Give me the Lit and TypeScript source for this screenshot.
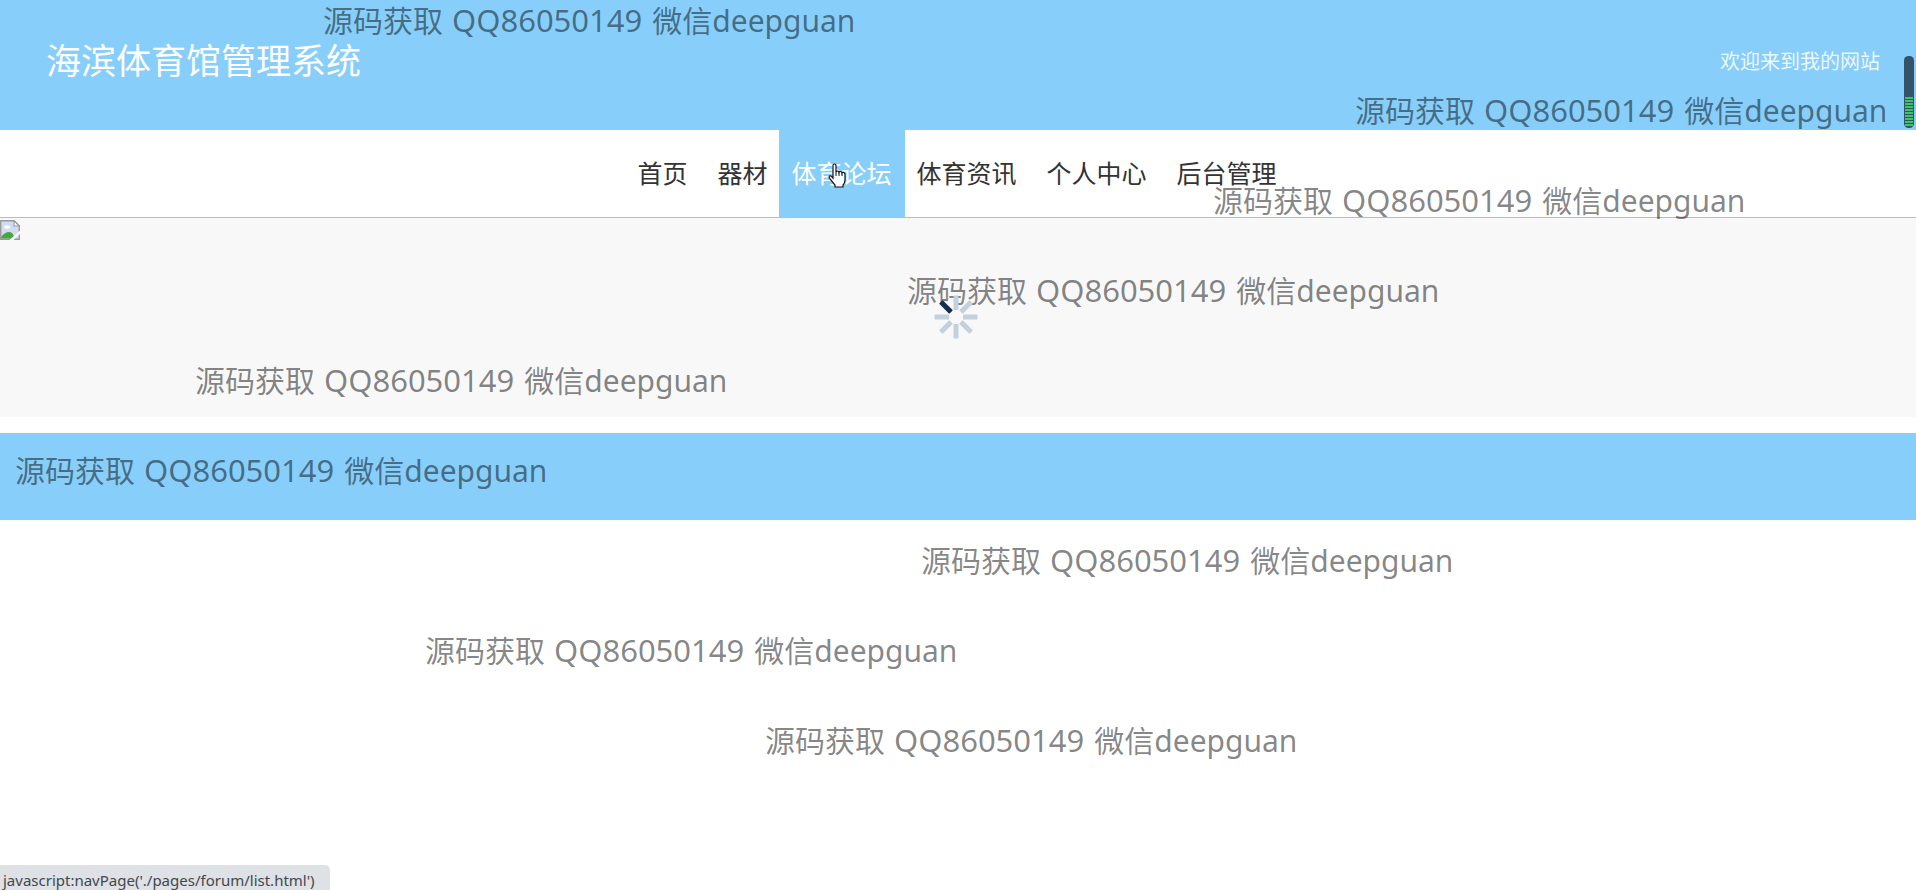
import { LitElement, html, css, svg } from "lit";
import { customElement } from "lit/decorators.js";

interface NavItem {
  label: string;
  page: string;
  active?: boolean;
}

const NAV: NavItem[] = [
  { label: "首页", page: "./pages/home/home.html" },
  { label: "器材", page: "./pages/equipment/list.html" },
  { label: "体育论坛", page: "./pages/forum/list.html", active: true },
  { label: "体育资讯", page: "./pages/news/list.html" },
  { label: "个人中心", page: "./pages/user/center.html" },
  { label: "后台管理", page: "./pages/admin/index.html" },
];

/* Left edge of each watermark line, top to bottom. */
const MARKS = [323, 1355, 1213, 907, 195, 15, 921, 425, 765];

@customElement("site-spinner")
export class SiteSpinner extends LitElement {
  static styles = css`
    :host { display: block; width: 44px; height: 44px; }
    svg { display: block; }
    .bar { fill: #c3d0de; }
    .lead { fill: #14304f; }
  `;
  render() {
    return html`<svg width="44" height="44" viewBox="-22 -22 44 44" aria-hidden="true">
      ${[0, 45, 90, 135, 180, 225, 270, 315].map(
        (a) => svg`<rect class=${a === 315 ? "lead" : "bar"} x="-2.5" y="-21.5" width="5" height="14.5" rx="0.6" transform="rotate(${a})"></rect>`
      )}
    </svg>`;
  }
}

@customElement("site-watermark")
export class SiteWatermark extends LitElement {
  static styles = css`
    :host {
      position: absolute;
      inset: 0;
      overflow: hidden;
      pointer-events: none;
      display: flex;
      flex-direction: column;
      gap: 50px;
    }
    .line {
      display: flex;
      flex: none;
      align-items: baseline;
      height: 40px;
      font-size: 30px;
      line-height: 40px;
      white-space: nowrap;
      color: rgba(0, 0, 0, 0.49);
    }
    .number { font-size: 31px; margin: 0 10px 0 9px; }
  `;
  render() {
    return MARKS.map(
      (x) => html`<div class="line" style="margin-left:${x}px"><span>源码获取</span><span class="number">QQ86050149</span><span>微信</span><span>deepguan</span></div>`
    );
  }
}

@customElement("app-root")
export class AppRoot extends LitElement {
  static styles = css`
    :host {
      display: block;
      position: relative;
      min-height: 100vh;
      overflow: hidden;
      background: #fff;
      color: #333;
      font-family: "Noto Sans", "Noto Sans CJK SC", sans-serif;
    }
    .header {
      display: flex;
      justify-content: space-between;
      align-items: center;
      height: 130px;
      padding: 0 36px 8px 46px;
      box-sizing: border-box;
      background: #87cefa;
      color: #fff;
    }
    .title { margin: 0; font-size: 35px; line-height: 48px; font-weight: 400; }
    .welcome { font-size: 20px; line-height: 28px; padding-top: 2px; opacity: 0.85; }
    .nav {
      display: flex;
      justify-content: center;
      gap: 6px;
      padding-right: 2px;
      border-bottom: 1px solid #bbb;
    }
    .link {
      padding: 0 12px;
      font-size: 25px;
      line-height: 87px;
      color: #333;
      text-decoration: none;
    }
    .link.active { margin: 0 -6px; padding-right: 13px; background: #87cefa; color: #fff; }
    .banner {
      position: relative;
      height: 199px;
      background: #f8f8f8;
    }
    .broken { display: block; padding-top: 2px; }
    .spinner { position: absolute; left: calc(50% - 24px); top: 295px; }
    .footer { height: 87px; margin-top: 16px; background: #87cefa; }
    .status {
      position: absolute;
      left: 0;
      bottom: 0;
      padding: 0 15px 0 3px;
      height: 25px;
      box-sizing: border-box;
      font-size: 15px;
      line-height: 30px;
      color: #44474c;
      background: #dee1e6;
      border-top-right-radius: 5px;
    }
    .gauge { position: absolute; right: 2px; top: 56px; }
    .cursor { position: absolute; left: 828px; top: 163px; }
  `;

  render() {
    return html`
      <header class="header">
        <h1 class="title">海滨体育馆管理系统</h1>
        <div class="welcome">欢迎来到我的网站</div>
      </header>
      <nav class="nav">
        ${NAV.map(
          (n) => html`<a class="link ${n.active ? "active" : ""}" href="javascript:navPage('${n.page}')">${n.label}</a>`
        )}
      </nav>
      <main>
        <section class="banner">
          <svg class="broken" width="20" height="20" viewBox="0 0 20 20" role="img" aria-label="banner">
            <path d="M.7.7H14l5.3 5.3v13.3H.7z" fill="#cfdcf3" stroke="#9a9a9a" stroke-width="1.4"/>
            <path d="M14 .7V6h5.3z" fill="#fff" stroke="#9a9a9a" stroke-width="1.2"/>
            <ellipse cx="7" cy="7" rx="3" ry="1.8" fill="#fff"/>
            <path d="M1.4 18.6v-2q4-5 8-4.6 4 .4 5 6.6z" fill="#4aa63c"/>
            <path d="M9.5 20 20 10.5V14l-6.5 6z" fill="#f8f8f8"/>
          </svg>
        </section>
      </main>
      <footer class="footer"></footer>
      <site-watermark></site-watermark>
      <site-spinner class="spinner"></site-spinner>
      <svg class="gauge" width="10" height="72" viewBox="0 0 10 72" aria-hidden="true">
        <rect width="10" height="72" rx="4.5" fill="#34536a"/>
        ${Array.from({ length: 10 }, (_, i) => svg`<rect x="1" y=${41 + i * 3} width="8" height="2" fill="#3fc464"></rect>`)}
      </svg>
      <svg class="cursor" width="18" height="25" viewBox="0 0 18 25" aria-hidden="true">
        <path d="M5 15V2.5q0-1.5 1.5-1.5T8 2.5V9q.3-1 1.5-1t1.5 1.3q.3-.8 1.5-.8T14 10q.3-.7 1.3-.7T17 11v6q0 3-2 5v2H7v-2L2 16q-1.500-2-.5-3T5 15z" fill="#fff" stroke="#111" stroke-width="1.2"/>
        <path d="M8 9v4M11 9.5V13M14 10.5V13" stroke="#111" fill="none"/>
      </svg>
      <div class="status">javascript:navPage('./pages/forum/list.html')</div>
    `;
  }
}
